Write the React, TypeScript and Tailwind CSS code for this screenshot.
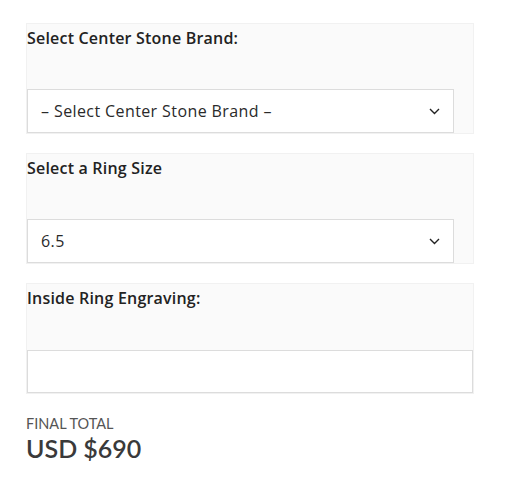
import { useState } from "react"

const labelFont = { fontFamily: "'Open Sans', 'Liberation Sans', sans-serif" }
const totalFont = { fontFamily: "Lato, 'Liberation Sans', sans-serif" }

function Chevron() {
  return (
    <svg width="11" height="7" viewBox="0 0 11 7" fill="none" className="shrink-0">
      <path d="M1 1l4.5 4.5L10 1" stroke="#222" strokeWidth="1.4" />
    </svg>
  )
}

function SelectField({ label, value }: { label: string; value: string }) {
  return (
    <div className="flex h-[111px] w-[448px] flex-col border border-[#f1f1f1] bg-[#fafafa]">
      <div className="h-[65px] pt-[2px] text-[16px] leading-[24px] font-semibold tracking-[0.2px] text-[#222]" style={labelFont}>
        {label}
      </div>
      <div className="flex h-[44px] w-[427px] items-center justify-between border border-[#dcdcdc] bg-white pl-[13px] pr-[13px]">
        <span className="text-[16px] font-medium tracking-[0.4px] text-[#2a2a2a]" style={labelFont}>{value}</span>
        <Chevron />
      </div>
    </div>
  )
}

export default function App() {
  const [engraving, setEngraving] = useState<string>("")

  return (
    <div className="min-h-[491px] bg-white pl-[26px] pt-[23px]">
      <div className="flex flex-col gap-[19px]">
        <SelectField label="Select Center Stone Brand:" value="– Select Center Stone Brand –" />
        <SelectField label="Select a Ring Size" value="6.5" />

        <div className="flex h-[111px] w-[448px] flex-col border border-[#f1f1f1] bg-[#fafafa]">
          <div className="h-[66px] pt-[2px] text-[16px] leading-[24px] font-semibold tracking-[0.2px] text-[#222]" style={labelFont}>
            Inside Ring Engraving:
          </div>
          <input
            type="text"
            value={engraving}
            onChange={(e) => setEngraving(e.target.value)}
            className="h-[43px] w-full border border-[#dcdcdc] bg-white outline-none"
          />
        </div>
      </div>

      <div className="mt-[21px] text-[14.5px] leading-[18px] text-[#555]" style={totalFont}>
        FINAL TOTAL
      </div>
      <div className="text-[25px] font-semibold leading-[30px] text-[#3a3a3a]" style={totalFont}>
        USD $690
      </div>
    </div>
  )
}
